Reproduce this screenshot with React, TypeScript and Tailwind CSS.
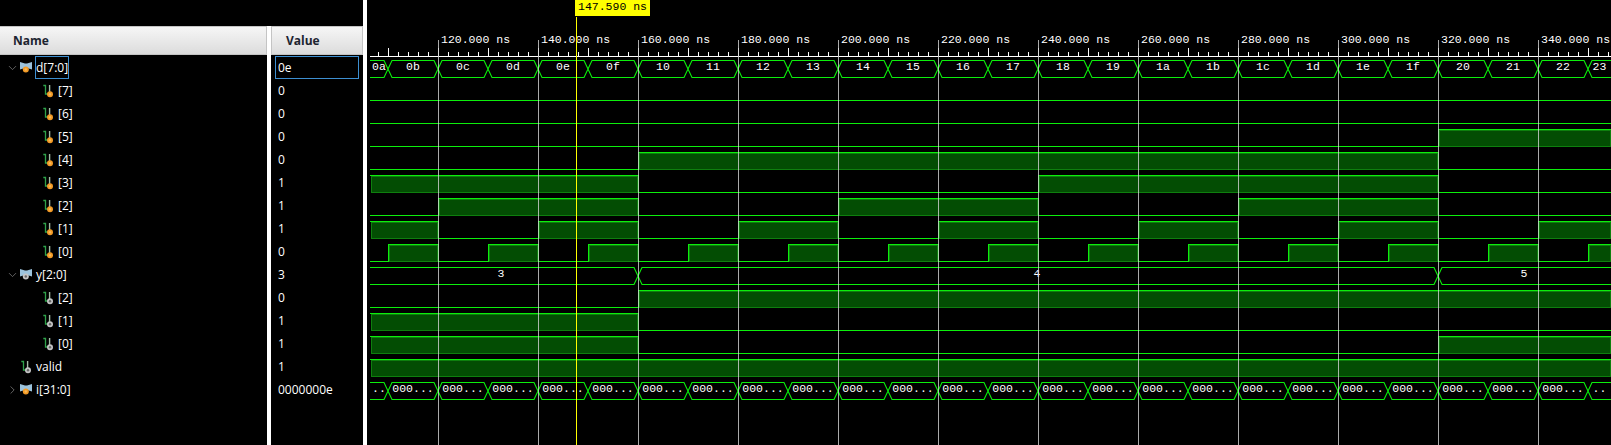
import { ChevronDown, ChevronRight } from "lucide-react";

type Row = {
  name: string;
  value: string;
  kind: "bus" | "wire";
  indent?: boolean;
  open?: boolean;
  gray?: boolean;
};

const rows: Row[] = [
  { name: "d[7:0]", value: "0e", kind: "bus", open: true },
  { name: "[7]", value: "0", kind: "wire", indent: true },
  { name: "[6]", value: "0", kind: "wire", indent: true },
  { name: "[5]", value: "0", kind: "wire", indent: true },
  { name: "[4]", value: "0", kind: "wire", indent: true },
  { name: "[3]", value: "1", kind: "wire", indent: true },
  { name: "[2]", value: "1", kind: "wire", indent: true },
  { name: "[1]", value: "1", kind: "wire", indent: true },
  { name: "[0]", value: "0", kind: "wire", indent: true },
  { name: "y[2:0]", value: "3", kind: "bus", open: true, gray: true },
  { name: "[2]", value: "0", kind: "wire", indent: true, gray: true },
  { name: "[1]", value: "1", kind: "wire", indent: true, gray: true },
  { name: "[0]", value: "1", kind: "wire", indent: true, gray: true },
  { name: "valid", value: "1", kind: "wire", gray: true },
  { name: "i[31:0]", value: "0000000e", kind: "bus" },
];

const LEFT = 370;
const RIGHT = 1611;
const SLOPE = 4;
const GREEN = "#0cee0c";
const toX = (t: number) => 438 + (t - 120) * 5;
const rowTop = (n: number) => 60 + n * 23;
const hex = (n: number) => n.toString(16).padStart(2, "0");
const START = 100;
const END = 350;

const dValue = (t: number) => Math.floor(t / 10);
const yValue = (t: number) => (t < 160 ? 3 : t < 320 ? 4 : 5);

// bit rows, row index -> level at time t
const bits: { row: number; at: (t: number) => boolean }[] = [
  ...[7, 6, 5, 4, 3, 2, 1, 0].map((b, i) => ({
    row: i + 1,
    at: (t: number) => ((dValue(t) >> b) & 1) === 1,
  })),
  ...[2, 1, 0].map((b, i) => ({
    row: i + 10,
    at: (t: number) => ((yValue(t) >> b) & 1) === 1,
  })),
  { row: 13, at: () => true },
];

const segments = (at: (t: number) => boolean) => {
  const out: { from: number; to: number; high: boolean }[] = [];
  for (let t = START; t <= END; t += 10) {
    const high = at(t);
    const from = Math.max(toX(t), LEFT);
    const to = Math.min(toX(t + 10), RIGHT);
    const last = out[out.length - 1];
    if (last && last.high === high) last.to = to;
    else out.push({ from, to, high });
  }
  return out;
};

const BusIcon = ({ gray }: { gray?: boolean }) => (
  <svg width="14" height="14" viewBox="0 0 14 14" className="shrink-0">
    <path d="M1 1 L6 2.5 L8 2.5 L13 1 L13 8.5 L8 7 L6 7 L1 8.5 Z" fill="#9cc3dc" />
    <circle cx="6.8" cy="8.5" r="3" fill={gray ? "#c4c4c4" : "#f39a25"} />
    <circle cx="6.8" cy="8.5" r="1.2" fill={gray ? "#666666" : "#f7b95a"} />
  </svg>
);

const WireIcon = ({ gray }: { gray?: boolean }) => (
  <svg width="12" height="14" viewBox="0 0 12 14" className="shrink-0">
    <path d="M0.3 1.5 H2.5 V10 H6" fill="none" stroke="#2fa24a" strokeWidth="1.3" />
    <path d="M6.6 1 V8" fill="none" stroke="#a3bda6" strokeWidth="1.4" />
    <circle cx="7" cy="10.2" r="3" fill={gray ? "#c4c4c4" : "#f39a25"} />
    <circle cx="7" cy="10.2" r="1.2" fill={gray ? "#666666" : "#f7b95a"} />
  </svg>
);

const NameRow = ({ row, selected }: { row: Row; selected: boolean }) => (
  <div className={`flex h-[23px] items-center ${row.indent ? "pl-[43px]" : "pl-[6px]"}`}>
    {!row.indent && (
      <div className="flex w-[13px] shrink-0 items-center">
        {row.kind === "bus" &&
          (row.open ? (
            <ChevronDown size={14} strokeWidth={1.5} className="text-[#767676]" />
          ) : (
            <ChevronRight size={14} strokeWidth={1.5} className="text-[#767676]" />
          ))}
      </div>
    )}
    {row.kind === "bus" ? (
      <BusIcon gray={row.gray} />
    ) : (
      <div className={row.indent ? "" : "pl-[2px]"}>
        <WireIcon gray={row.gray} />
      </div>
    )}
    <span
      className={`ml-[2px] flex h-[23px] items-center whitespace-nowrap ${
        selected ? "w-[34px] border border-[#3d8fd1]" : "px-[1px]"
      }`}
    >
      {row.name}
    </span>
  </div>
);

const Wave = ({ row, at }: { row: number; at: (t: number) => boolean }) => {
  const top = rowTop(row);
  const bottom = top + 17;
  const segs = segments(at);
  return (
    <g>
      {segs.map((s, i) =>
        s.high ? (
          <g key={i}>
            <rect x={s.from + 1} y={top + 1} width={s.to - s.from - 2} height={16} fill="#034d03" stroke="#0e7f0e" />
            <rect x={s.from} y={top} width={s.to - s.from} height={1} fill={GREEN} />
          </g>
        ) : (
          <rect key={i} x={s.from} y={bottom} width={s.to - s.from} height={1} fill={GREEN} />
        ),
      )}
      {segs.map((s, i) =>
        i > 0 ? <rect key={i} x={s.from} y={top} width={1} height={18} fill={GREEN} /> : null,
      )}
    </g>
  );
};

const Bus = ({
  row,
  cells,
}: {
  row: number;
  cells: { from: number; to: number; label: string; lx?: number }[];
}) => {
  const top = rowTop(row) + 0.5;
  const bottom = top + 17;
  const mid = (top + bottom) / 2;
  return (
    <g shapeRendering="geometricPrecision">
      {cells.map((c) => {
        const openLeft = c.from <= LEFT;
        const openRight = c.to >= RIGHT;
        const a = openLeft ? LEFT : c.from + SLOPE;
        const b = openRight ? RIGHT : c.to - SLOPE;
        const upper = `M${openLeft ? a : c.from} ${openLeft ? top : mid} L${a} ${top} L${b} ${top}${
          openRight ? "" : ` L${c.to} ${mid}`
        }`;
        const lower = `M${openRight ? b : c.to} ${openRight ? bottom : mid} L${b} ${bottom} L${a} ${bottom}${
          openLeft ? "" : ` L${c.from} ${mid}`
        }`;
        return (
          <g key={c.from}>
            <path d={`${upper} ${lower}`} fill="none" stroke={GREEN} strokeWidth={1.1} />
            <text
              x={c.lx ?? (c.from + c.to) / 2}
              y={rowTop(row) + 10}
              textAnchor="middle"
              className="fill-white font-['Liberation_Mono',monospace] text-[11.5px]"
            >
              {c.label}
            </text>
          </g>
        );
      })}
    </g>
  );
};

const dCells = Array.from({ length: 26 }, (_, i) => {
  const t = START + i * 10;
  return { from: Math.max(toX(t), LEFT), to: Math.min(toX(t + 10), RIGHT), label: hex(dValue(t)) };
});

const iCells = dCells.map((c, i) => ({
  ...c,
  label: i === 0 || i === dCells.length - 1 ? ".." : "000...",
}));

const yCells = [
  { from: LEFT, to: 638, label: "3", lx: 501 },
  { from: 638, to: 1438, label: "4", lx: 1037 },
  { from: 1438, to: RIGHT, label: "5", lx: 1524 },
];

const minorTicks = Array.from({ length: 125 }, (_, i) => 378 + i * 10);
const gridTimes = Array.from({ length: 12 }, (_, i) => 120 + i * 20);

export default function App() {
  return (
    <div className="flex h-[445px] w-[1611px] overflow-hidden bg-black font-['Open_Sans',sans-serif] text-[12px] text-white">
      <div className="flex w-[363px] shrink-0 pt-[26px]">
        <div className="w-[267px] shrink-0">
          <div className="flex h-[29px] items-center border-y border-r border-[#c4c4c4] bg-gradient-to-b from-[#f6f6f6] to-[#dcdcdc] pt-[1px] pl-[13px] font-bold text-[#1c2430]">
            Name
          </div>
          <div className="pt-[1px]">
            {rows.map((row, i) => (
              <NameRow key={i} row={row} selected={i === 0} />
            ))}
          </div>
        </div>
        <div className="w-[4px] shrink-0 bg-white" />
        <div className="w-[92px] shrink-0">
          <div className="flex h-[29px] items-center border border-[#c4c4c4] bg-gradient-to-b from-[#f6f6f6] to-[#dcdcdc] pt-[1px] pl-[14px] font-bold text-[#1c2430]">
            Value
          </div>
          <div className="pt-[1px]">
            {rows.map((row, i) => (
              <div
                key={i}
                className={`flex h-[23px] items-center ${
                  i === 0 ? "mx-[4px] border border-[#3d8fd1] pl-[2px]" : "pl-[7px]"
                }`}
              >
                {row.value}
              </div>
            ))}
          </div>
        </div>
      </div>
      <div className="w-[4px] shrink-0 bg-white" />
      <svg
        width="1244"
        height="445"
        viewBox="367 0 1244 445"
        shapeRendering="crispEdges"
        className="shrink-0"
      >
        {/* time ruler */}
        <rect x={LEFT} y={56} width={RIGHT - LEFT} height={1} fill="#ffffff" />
        {minorTicks.map((x) => (
          <rect
            key={x}
            x={x}
            y={(x - 388) % 50 === 0 ? 48 : 52}
            width={1}
            height={(x - 388) % 50 === 0 ? 8 : 4}
            fill="#ffffff"
          />
        ))}
        {gridTimes.map((t) => (
          <text
            key={t}
            x={toX(t) + 3}
            y={43}
            className="fill-white font-['Liberation_Mono',monospace] text-[11.5px]"
          >
            {t}.000 ns
          </text>
        ))}

        <Bus row={0} cells={dCells} />
        {bits.map((b) => (
          <Wave key={b.row} row={b.row} at={b.at} />
        ))}
        <Bus row={9} cells={yCells} />
        <Bus row={14} cells={iCells} />

        {/* grid */}
        {gridTimes.map((t) => (
          <rect key={t} x={toX(t)} y={40} width={1} height={405} fill="#d4d4d4" opacity={0.8} />
        ))}

        {/* cursor */}
        <rect x={576} y={17} width={1} height={428} fill="#ffff00" />
        <rect x={575} y={0} width={75} height={16} fill="#ffff00" />
        <text
          x={578}
          y={10}
          className="fill-black font-['Liberation_Mono',monospace] text-[11.5px]"
        >
          147.590 ns
        </text>
      </svg>
    </div>
  );
}
